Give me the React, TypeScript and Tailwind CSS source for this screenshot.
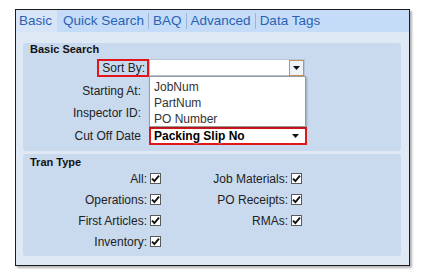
import React from "react";

const font = { fontFamily: '"Liberation Sans", Arial, sans-serif' };

function Arrow() {
  return (
    <svg width="7" height="4" viewBox="0 0 7 4">
      <path d="M0 0 H7 L3.5 4 Z" fill="#111" />
    </svg>
  );
}

function Check() {
  return (
    <span className="flex h-[11px] w-[11px] items-center justify-center border border-[#5a5a5a] bg-white">
      <svg width="9" height="9" viewBox="0 0 9 9">
        <path
          d="M1 4.6 L3.4 7 L8 1.6"
          fill="none"
          stroke="#111"
          strokeWidth="1.9"
        />
      </svg>
    </span>
  );
}

function CheckRow({ label }: { label: string }) {
  return (
    <div className="flex h-[21px] items-center justify-end gap-[3px] text-[12px] text-[#222]">
      <span>{label}</span>
      <Check />
    </div>
  );
}

const tabs = ["Quick Search", "BAQ", "Advanced", "Data Tags"];

export default function App() {
  return (
    <div className="h-[276px] w-[447px] bg-white pl-[15px] pt-[9px]" style={font}>
      <div className="flex h-[257px] w-[395px] flex-col border border-[#1c1c1c] bg-[#dfe8f5] shadow-[2px_2px_2px_rgba(0,0,0,0.3)]">
        {/* tab strip */}
        <div className="flex h-[22px] items-center bg-[#c4dcf8] text-[13.5px] text-[#2a62b3]">
          <div className="flex h-full items-center bg-[#d8e5f6] pl-[3px] pr-[5px]">Basic</div>
          {tabs.map((t, i) => (
            <div key={t} className="flex items-center">
              {i > 0 && <span className="mx-[4px] h-[16px] w-px bg-[#9bb5d6]" />}
              <span className={i === 0 ? "ml-[6px]" : ""}>{t}</span>
            </div>
          ))}
        </div>

        <div className="flex flex-col gap-[3px] px-[7px] pt-[11px]">
          {/* Basic Search group */}
          <div className="relative h-[108px] w-[378px] rounded-[3px] bg-[#c9d9ee]">
            <div className="pl-[7px] text-[11px] font-bold leading-[12px] text-[#111]">Basic Search</div>

            <div className="mt-[4px] flex h-[18px]">
              <div className="flex w-[126px] justify-end">
                <div className="flex h-[18px] items-center border-2 border-[#e0161b] pl-[3px] pr-[2px] text-[12px] text-[#222]">
                  Sort By:
                </div>
              </div>
              <div className="flex h-[17px] w-[156px] items-center justify-end border border-[#b7c4d6] bg-white">
                <div className="flex h-[16px] w-[15px] items-center justify-center border border-[#c8935a] bg-[#eef3fa]">
                  <Arrow />
                </div>
              </div>
            </div>

            <div className="mt-[5px] flex h-[18px] items-center">
              <div className="w-[126px] pr-[8px] text-right text-[12px] text-[#222]">Starting At:</div>
            </div>
            <div className="mt-[4px] flex h-[18px] items-center">
              <div className="w-[126px] pr-[8px] text-right text-[12px] text-[#222]">Inspector ID:</div>
            </div>

            <div className="mt-[5px] flex h-[18px] items-center">
              <div className="w-[126px] pr-[8px] text-right text-[12px] text-[#222]">Cut Off Date</div>
              <div className="flex h-[18px] w-[158px] items-center justify-between border-2 border-[#e0161b] bg-white pl-[3px] pr-[6px]">
                <span
                  className="text-[12px] font-bold text-black"
                  style={{ textShadow: "0 0 2px #fff, 0 0 2px #fff" }}
                >
                  Packing Slip No
                </span>
                <Arrow />
              </div>
            </div>

            {/* open dropdown list */}
            <div className="absolute left-[126px] top-[33px] flex h-[51px] w-[157px] flex-col border border-[#9a9a9a] bg-white pl-[4px] pt-[2px] text-[12px] text-[#333] shadow-[1px_1px_2px_rgba(0,0,0,0.25)]">
              <div className="h-[16.5px] leading-[16px]">JobNum</div>
              <div className="h-[16.5px] leading-[16px]">PartNum</div>
              <div className="h-[16.5px] leading-[16px]">PO Number</div>
            </div>
          </div>

          {/* Tran Type group */}
          <div className="h-[102px] w-[378px] rounded-[3px] bg-[#c9d9ee] pt-[2px]">
            <div className="h-[12px] pl-[7px] text-[11px] font-bold leading-[12px] text-[#111]">Tran Type</div>
            <div className="grid grid-cols-[138px_141px]">
              <div className="flex flex-col">
                <CheckRow label="All:" />
                <CheckRow label="Operations:" />
                <CheckRow label="First Articles:" />
                <CheckRow label="Inventory:" />
              </div>
              <div className="flex flex-col">
                <CheckRow label="Job Materials:" />
                <CheckRow label="PO Receipts:" />
                <CheckRow label="RMAs:" />
              </div>
            </div>
          </div>
        </div>
      </div>
    </div>
  );
}
